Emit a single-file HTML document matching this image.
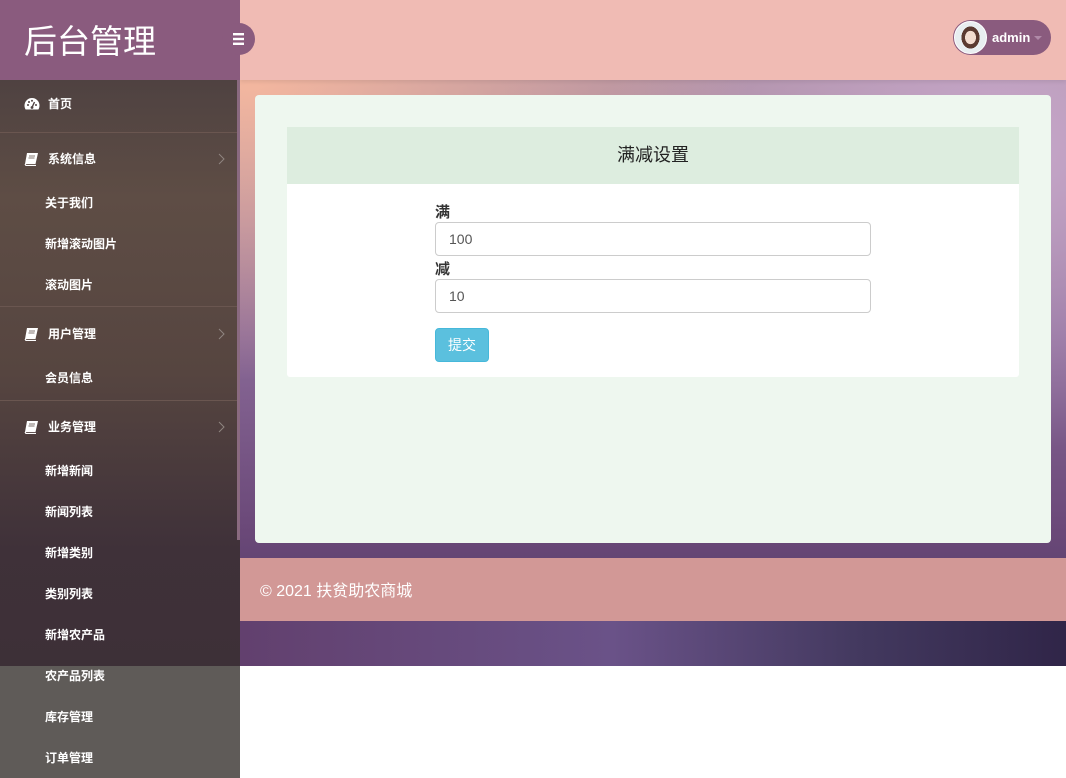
<!DOCTYPE html>
<html><head><meta charset="utf-8"><style>
*{box-sizing:border-box;margin:0;padding:0}
body{width:1066px;height:778px;overflow:hidden;background:#fff;font-family:"Liberation Sans","Noto Sans CJK SC",sans-serif;position:relative}
.bg{position:absolute;left:0;top:0;width:1066px;height:666px;background:
radial-gradient(ellipse 500px 300px at 250px 80px,#f4b79f 0%,rgba(244,183,159,0) 100%),
radial-gradient(ellipse 400px 300px at 1000px 150px,#c7a8cb 0%,rgba(199,168,203,0) 100%),
linear-gradient(180deg,#b89aa6 0%,#8a6a98 50%,#6a4878 80%,#4a3a62 100%)}
.bot{position:absolute;left:240px;top:621px;width:826px;height:45px;background:linear-gradient(90deg,#62406e 0%,#6a5288 45%,#43395f 75%,#302548 100%)}
.top{position:absolute;left:240px;top:0;width:826px;height:80px;background:#f0bbb4;box-shadow:0 2px 4px rgba(0,0,0,.08)}
.side{position:absolute;left:0;top:0;width:240px;height:778px;background:#5f5b58}
.logo{position:absolute;left:0;top:0;width:240px;height:80px;background:#8a5b7e;color:#fff;font-size:33px;padding:22px 0 0 24px;line-height:40px}
.tog{position:absolute;left:222px;top:23px;width:33px;height:32px;border-radius:16px;background:#8a5b7e}
.menu{position:absolute;left:0;top:80px;width:240px;height:586px;background:linear-gradient(180deg,#4f4241 0%,#5e4d45 20%,#564540 50%,#3f3139 80%,#3d3037 100%)}
.it{position:absolute;left:0;color:#fff;font-size:12px;width:240px;line-height:14px;font-weight:bold}
.sub{padding-left:45px}
.ic{position:absolute;left:24px;top:0}
.lbl{position:absolute;left:48px;top:0}
.arr{position:absolute;left:218px;top:0}
.sep{position:absolute;left:0;width:237px;height:1px;background:#6a5650}
.scr{position:absolute;left:237px;top:80px;width:3px;height:460px;background:#8a6a80}
.card{position:absolute;left:255px;top:95px;width:796px;height:448px;background:#eef7ef;border-radius:4px}
.panel{position:absolute;left:287px;top:127px;width:732px;height:250px;background:#fff;border-radius:3px}
.ph{height:57px;background:#ddeddf;text-align:center;font-size:18px;line-height:57px;color:#222}
.lab{position:absolute;left:148px;font-size:15px;font-weight:bold;color:#333}
.inp{position:absolute;left:148px;width:436px;height:34px;border:1px solid #ccc;border-radius:4px;padding-left:13px;line-height:32px;font-size:14px;color:#555}
.btn{position:absolute;left:148px;top:201px;width:54px;height:34px;background:#5bc0de;border:1px solid #46b8da;border-radius:4px;color:#fff;font-size:14px;text-align:center;line-height:32px}
.foot{position:absolute;left:240px;top:558px;width:826px;height:63px;background:#d29896;color:#fff;font-size:16px;padding:19px 0 0 20px}
.user{position:absolute;left:953px;top:20px;width:98px;height:35px;border-radius:18px;background:#8a5b7e;color:#fff;font-size:13px;font-weight:bold}
.av{position:absolute;left:1px;top:1px;width:33px;height:33px;border-radius:50%;background:radial-gradient(ellipse 9px 11px at 50% 50%,#f2dccf 0 60%,#5a3a30 62% 100%,transparent 101%),#e8eef0;border:1px solid #fff}
</style></head><body>
<div class="bg"></div>
<div class="bot"></div>
<div class="top"></div>
<div class="user"><div class="av"></div><span style="position:absolute;left:39px;top:10px">admin</span><span style="position:absolute;left:81px;top:16px;width:0;height:0;border-left:4px solid transparent;border-right:4px solid transparent;border-top:4px solid #b08aa8"></span></div>
<div class="side">
<div class="menu"></div>
<div class="logo">后台管理</div>
<div class="tog"><svg width="33" height="32" viewBox="0 0 33 32"><rect x="11" y="10" width="11" height="2.4" fill="#fff"/><rect x="11" y="14.8" width="11" height="2.4" fill="#fff"/><rect x="11" y="19.6" width="11" height="2.4" fill="#fff"/></svg></div>
<div class="it" style="top:97px"><svg class="ic" width="16" height="14" viewBox="0 0 16 14"><path d="M8 1A7.5 7.5 0 0 0 .5 8.5c0 1.5.4 2.8 1.1 4h12.8c.7-1.2 1.1-2.5 1.1-4A7.5 7.5 0 0 0 8 1z" fill="#fff"/><circle cx="4" cy="8" r="1" fill="#4f4241"/><circle cx="5" cy="5" r="1" fill="#4f4241"/><circle cx="8" cy="3.8" r="1" fill="#4f4241"/><circle cx="12" cy="8" r="1" fill="#4f4241"/><path d="M8 10.5L10.5 5" stroke="#4f4241" stroke-width="1.4"/><circle cx="8" cy="10.5" r="1.4" fill="#4f4241"/></svg><span class="lbl">首页</span></div>
<div class="sep" style="top:132px"></div>
<div class="it" style="top:152px"><svg class="ic" width="15" height="14" viewBox="0 0 15 14"><path d="M3 1h11l-2.5 11H1z" fill="#fff"/><path d="M1 12l1 1.5h10" stroke="#fff" stroke-width="1.2" fill="none"/><path d="M5 4h6M4.5 6h6" stroke="#5e4d45" stroke-width="0.8"/></svg><span class="lbl">系统信息</span><svg class="arr" width="8" height="14" viewBox="0 0 8 14"><path d="M1 2l5 5-5 5" stroke="#8f8580" fill="none"/></svg></div>
<div class="it sub" style="top:196px">关于我们</div>
<div class="it sub" style="top:237px">新增滚动图片</div>
<div class="it sub" style="top:278px">滚动图片</div>
<div class="sep" style="top:306px"></div>
<div class="it" style="top:327px"><svg class="ic" width="15" height="14" viewBox="0 0 15 14"><path d="M3 1h11l-2.5 11H1z" fill="#fff"/><path d="M1 12l1 1.5h10" stroke="#fff" stroke-width="1.2" fill="none"/><path d="M5 4h6M4.5 6h6" stroke="#5a4842" stroke-width="0.8"/></svg><span class="lbl">用户管理</span><svg class="arr" width="8" height="14" viewBox="0 0 8 14"><path d="M1 2l5 5-5 5" stroke="#8f8580" fill="none"/></svg></div>
<div class="it sub" style="top:371px">会员信息</div>
<div class="sep" style="top:400px"></div>
<div class="it" style="top:420px"><svg class="ic" width="15" height="14" viewBox="0 0 15 14"><path d="M3 1h11l-2.5 11H1z" fill="#fff"/><path d="M1 12l1 1.5h10" stroke="#fff" stroke-width="1.2" fill="none"/><path d="M5 4h6M4.5 6h6" stroke="#52423f" stroke-width="0.8"/></svg><span class="lbl">业务管理</span><svg class="arr" width="8" height="14" viewBox="0 0 8 14"><path d="M1 2l5 5-5 5" stroke="#8f8580" fill="none"/></svg></div>
<div class="it sub" style="top:464px">新增新闻</div>
<div class="it sub" style="top:505px">新闻列表</div>
<div class="it sub" style="top:546px">新增类别</div>
<div class="it sub" style="top:587px">类别列表</div>
<div class="it sub" style="top:628px">新增农产品</div>
<div class="it sub" style="top:669px">农产品列表</div>
<div class="it sub" style="top:710px">库存管理</div>
<div class="it sub" style="top:751px">订单管理</div>
<div class="scr"></div>
</div>
<div class="card"></div>
<div class="panel">
<div class="ph">满减设置</div>
<div class="lab" style="top:74px">满</div>
<div class="inp" style="top:95px">100</div>
<div class="lab" style="top:131px">减</div>
<div class="inp" style="top:152px">10</div>
<div class="btn">提交</div>
</div>
<div class="foot">© 2021 扶贫助农商城</div>
</body></html>
